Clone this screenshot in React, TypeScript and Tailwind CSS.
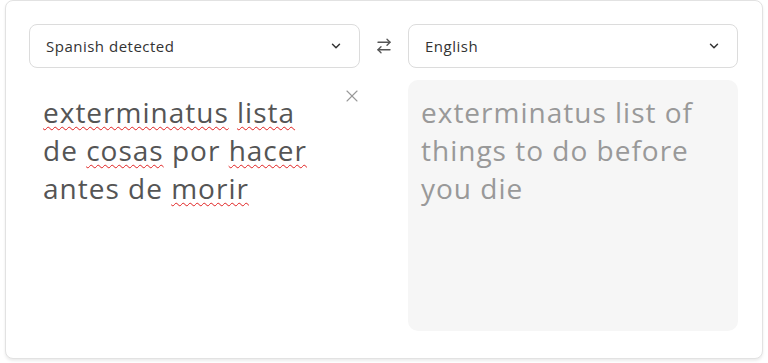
import React from 'react';
import { ArrowRightLeft, ChevronDown, X } from 'lucide-react';

const font = { fontFamily: '"Open Sans", "Noto Sans", sans-serif' };

const Misspelled: React.FC<{ children: React.ReactNode }> = ({ children }) => (
  <span className="underline decoration-wavy decoration-[#e02020] decoration-1 underline-offset-[3px]">{children}</span>
);

const LangSelect: React.FC<{ label: string }> = ({ label }) => (
  <div className="h-[44px] flex items-center justify-between rounded-lg border border-[#dcdcdc] bg-white pl-4 pr-4">
    <span className="text-[15px] tracking-[0.5px] text-[#333]">{label}</span>
    <ChevronDown size={14} strokeWidth={2.5} className="text-[#333]" />
  </div>
);

export default function App() {
  return (
    <div className="w-[768px] h-[363px] bg-white" style={font}>
      <div className="ml-[5px] w-[758px] h-[359px] rounded-lg border border-[#e2e2e2] bg-white shadow-[0_2px_3px_rgba(0,0,0,0.08)] pt-[23px] pl-[23px] pr-[24px] pb-[27px] flex flex-col">
        <div className="grid grid-cols-[331px_48px_1fr] items-center">
          <LangSelect label="Spanish detected" />
          <div className="flex justify-center text-[#555]">
            <ArrowRightLeft size={18} strokeWidth={1.8} />
          </div>
          <LangSelect label="English" />
        </div>
        <div className="mt-[12px] flex-1 grid grid-cols-[331px_48px_1fr]">
          <div className="relative pt-[13px] pl-[14px] pr-[4px]">
            <p className="text-[28px] tracking-[1px] leading-[38px] text-[#555]">
              <Misspelled>exterminatus</Misspelled> <Misspelled>lista</Misspelled>
              <br />
              de <Misspelled>cosas</Misspelled> por <Misspelled>hacer</Misspelled>
              <br />
              antes de <Misspelled>morir</Misspelled>
            </p>
            <X size={20} strokeWidth={1.3} className="absolute right-[-2px] top-[6px] text-[#999]" />
          </div>
          <div />
          <div className="rounded-[10px] bg-[#f6f6f6] pt-[13px] pl-[13px] pr-[4px]">
            <p className="text-[28px] tracking-[1px] leading-[38px] text-[#999]">
              exterminatus list of
              <br />
              things to do before
              <br />
              you die
            </p>
          </div>
        </div>
      </div>
    </div>
  );
}
